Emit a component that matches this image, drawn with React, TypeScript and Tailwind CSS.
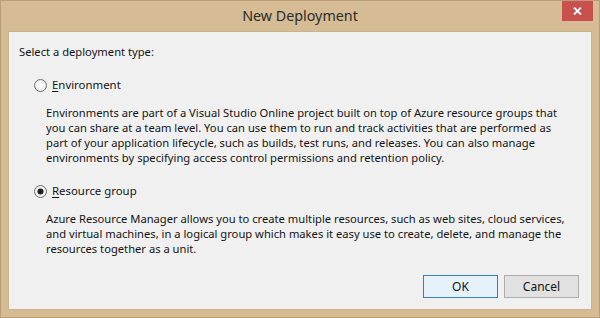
import React from "react";

function Radio({ checked }: { checked?: boolean }) {
  return (
    <svg width="13" height="13" viewBox="0 0 13 13" className="shrink-0">
      <defs>
        <radialGradient id={checked ? "rg1" : "rg0"} cx="50%" cy="50%" r="60%">
          <stop offset="0%" stopColor="#ffffff" />
          <stop offset="100%" stopColor="#e6e6e6" />
        </radialGradient>
      </defs>
      <circle cx="6.5" cy="6.5" r="6" fill={`url(#${checked ? "rg1" : "rg0"})`} stroke="#6f6f6f" strokeWidth="1" />
      {checked && <circle cx="6.5" cy="6.5" r="3" fill="#1f1f1f" />}
    </svg>
  );
}

function Option({
  accel,
  rest,
  checked,
  lines,
}: {
  accel: string;
  rest: string;
  checked?: boolean;
  lines: string[];
}) {
  return (
    <div className="flex flex-col">
      <div className="flex items-center gap-[5px] pl-[25px] h-[16px] text-[11.4px]">
        <Radio checked={checked} />
        <span>
          <span className="underline underline-offset-[2px]">{accel}</span>
          {rest}
        </span>
      </div>
      <div className="pl-[37px] mt-[12px] leading-[15px] text-[11.2px]">
        {lines.map((l) => (
          <div key={l} className="whitespace-nowrap">
            {l}
          </div>
        ))}
      </div>
    </div>
  );
}

export default function App() {
  return (
    <div className="w-[600px] h-[318px] bg-[#d6bc94] border border-[#b99f77] flex flex-col text-[#141414] font-['Noto_Sans',sans-serif] text-[11.5px] overflow-hidden">
      {/* title bar */}
      <div className="h-[30px] flex items-start shrink-0">
        <div className="flex-1 text-center text-[14.3px] leading-[30px] text-[#2b2b2b] pl-[37px]">
          New Deployment
        </div>
        <div className="w-[31px] h-[20px] bg-[#c9504c] flex items-center justify-center mr-[6px]">
          <svg width="9" height="8" viewBox="0 0 9 8">
            <path d="M1 0.5 L8 7.5 M8 0.5 L1 7.5" stroke="#ffffff" strokeWidth="1.8" />
          </svg>
        </div>
      </div>

      {/* client area */}
      <div className="flex-1 mx-[7px] mb-[7px] bg-[#f0f0f0] border border-[#c8b38f] flex flex-col">
        <div className="pl-[10px] pt-[12px] leading-[16px] text-[11.2px]">Select a deployment type:</div>

        <div className="mt-[17px] flex flex-col gap-[18px]">
          <Option
            accel="E"
            rest="nvironment"
            lines={[
              "Environments are part of a Visual Studio Online project built on top of Azure resource groups that",
              "you can share at a team level. You can use them to run and track activities that are performed as",
              "part of your application lifecycle, such as builds, test runs, and releases. You can also manage",
              "environments by specifying access control permissions and retention policy.",
            ]}
          />
          <Option
            accel="R"
            rest="esource group"
            checked
            lines={[
              "Azure Resource Manager allows you to create multiple resources, such as web sites, cloud services,",
              "and virtual machines, in a logical group which makes it easy use to create, delete, and manage the",
              "resources together as a unit.",
            ]}
          />
        </div>

        <div className="mt-auto mb-[11px] mr-[12px] flex justify-end gap-[6px] text-[12px]">
          <button className="w-[75px] h-[23px] bg-[#e5f1fb] border border-[#3c7fb1] leading-[21px]">OK</button>
          <button className="w-[75px] h-[23px] bg-[#e1e1e1] border border-[#adadad] leading-[21px]">Cancel</button>
        </div>
      </div>
    </div>
  );
}
